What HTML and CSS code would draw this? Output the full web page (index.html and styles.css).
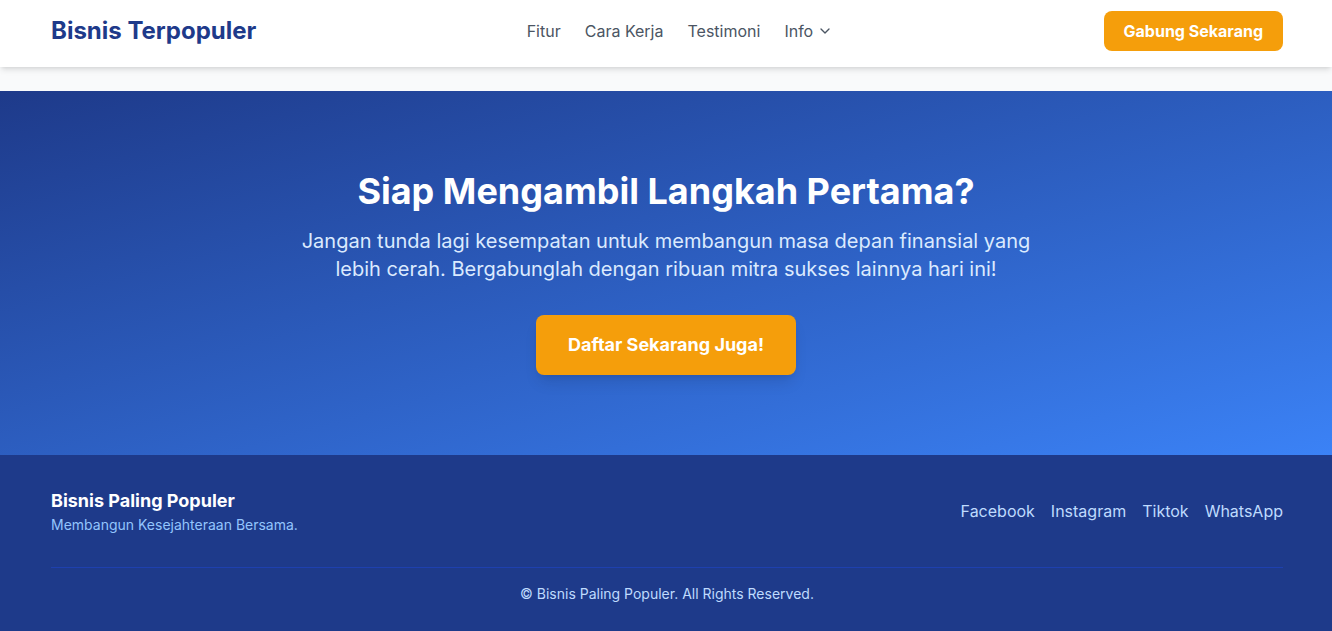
FILE: index.html
```html
<!DOCTYPE html>
<html lang="id">
<head>
<meta charset="utf-8">
<title>Bisnis Terpopuler</title>
<link rel="stylesheet" href="styles.css">
</head>
<body>
<header class="site-header">
  <div class="container header-inner">
    <a class="logo" href="#">Bisnis Terpopuler</a>
    <nav class="nav">
      <a href="#">Fitur</a>
      <a href="#">Cara Kerja</a>
      <a href="#">Testimoni</a>
      <a href="#" class="nav-drop">Info
        <svg width="16" height="16" viewBox="0 0 24 24" fill="none" stroke="currentColor" stroke-width="2" stroke-linecap="round" stroke-linejoin="round"><path d="M6 9l6 6 6-6"/></svg>
      </a>
    </nav>
    <a class="btn btn-sm" href="#">Gabung Sekarang</a>
  </div>
</header>
<main>
  <section class="cta">
    <div class="container cta-inner">
      <h2 class="cta-title">Siap Mengambil Langkah Pertama?</h2>
      <p class="cta-text">Jangan tunda lagi kesempatan untuk membangun masa depan finansial yang lebih cerah. Bergabunglah dengan ribuan mitra sukses lainnya hari ini!</p>
      <a class="btn btn-lg" href="#">Daftar Sekarang Juga!</a>
    </div>
  </section>
</main>
<footer class="site-footer">
  <div class="container">
    <div class="footer-top">
      <div class="footer-brand">
        <h3>Bisnis Paling Populer</h3>
        <p>Membangun Kesejahteraan Bersama.</p>
      </div>
      <nav class="footer-links">
        <a href="#">Facebook</a>
        <a href="#">Instagram</a>
        <a href="#">Tiktok</a>
        <a href="#">WhatsApp</a>
      </nav>
    </div>
    <div class="footer-bottom">© Bisnis Paling Populer. All Rights Reserved.</div>
  </div>
</footer>
</body>
</html>
```
FILE: styles.css
```css
* { box-sizing: border-box; margin: 0; padding: 0; }
html, body { background: #f9fafb; }
body {
  font-family: Inter, "Noto Sans", "Liberation Sans", sans-serif;
  color: #1f2937;
  line-height: 1.5;
}
a { text-decoration: none; color: inherit; }
.container {
  max-width: 1280px;
  margin: 0 auto;
  padding: 0 23px 0 25px;
}
.site-header {
  background: #fff;
  box-shadow: 0 4px 6px -1px rgba(0,0,0,0.1), 0 2px 4px -2px rgba(0,0,0,0.1);
  position: relative;
  z-index: 2;
}
.header-inner {
  display: flex;
  align-items: center;
  justify-content: space-between;
  padding-top: 11px;
  padding-bottom: 16px;
}
.logo {
  font-size: 24px;
  line-height: 32px;
  font-weight: 700;
  color: #1e3a8a;
}
.nav {
  display: flex;
  align-items: center;
  gap: 24px;
}
.nav a {
  color: #4b5563;
  font-size: 16px;
  line-height: 24px;
}
.nav-drop {
  display: flex;
  align-items: center;
  gap: 4px;
}
.btn {
  display: inline-block;
  background: #f59e0b;
  color: #fff;
  font-weight: 700;
  border-radius: 8px;
}
.btn-sm {
  font-size: 16px;
  line-height: 24px;
  padding: 8px 20px;
}
.btn-lg {
  font-size: 18px;
  line-height: 28px;
  padding: 16px 32px;
  box-shadow: 0 10px 15px -3px rgba(0,0,0,0.1), 0 4px 6px -4px rgba(0,0,0,0.1);
}
main { padding-top: 24px; }
.cta {
  background: linear-gradient(to bottom right, #1e3a8a, #3b82f6);
  padding: 80px 0;
  color: #fff;
}
.cta-inner {
  display: flex;
  flex-direction: column;
  align-items: center;
  text-align: center;
  padding: 0 24px;
}
.cta-title {
  font-size: 36px;
  line-height: 40px;
  font-weight: 700;
  margin-bottom: 16px;
}
.cta-text {
  font-size: 20px;
  line-height: 28px;
  color: #dbeafe;
  max-width: 768px;
  margin-bottom: 32px;
}
.site-footer {
  background: #1e3a8a;
  color: #bfdbfe;
  padding: 32px 0;
}
.footer-top {
  display: flex;
  justify-content: space-between;
  align-items: center;
}
.footer-brand h3 {
  font-size: 18px;
  line-height: 28px;
  font-weight: 700;
  color: #fff;
}
.footer-brand p {
  font-size: 14px;
  line-height: 20px;
  color: #93c5fd;
}
.footer-links {
  display: flex;
  gap: 16px;
}
.footer-links a {
  font-size: 16px;
  line-height: 24px;
  color: #bfdbfe;
}
.footer-bottom {
  margin-top: 32px;
  border-top: 1px solid #1e40af;
  padding-top: 16px;
  text-align: center;
  font-size: 14px;
  line-height: 20px;
  color: #bfdbfe;
}
```
